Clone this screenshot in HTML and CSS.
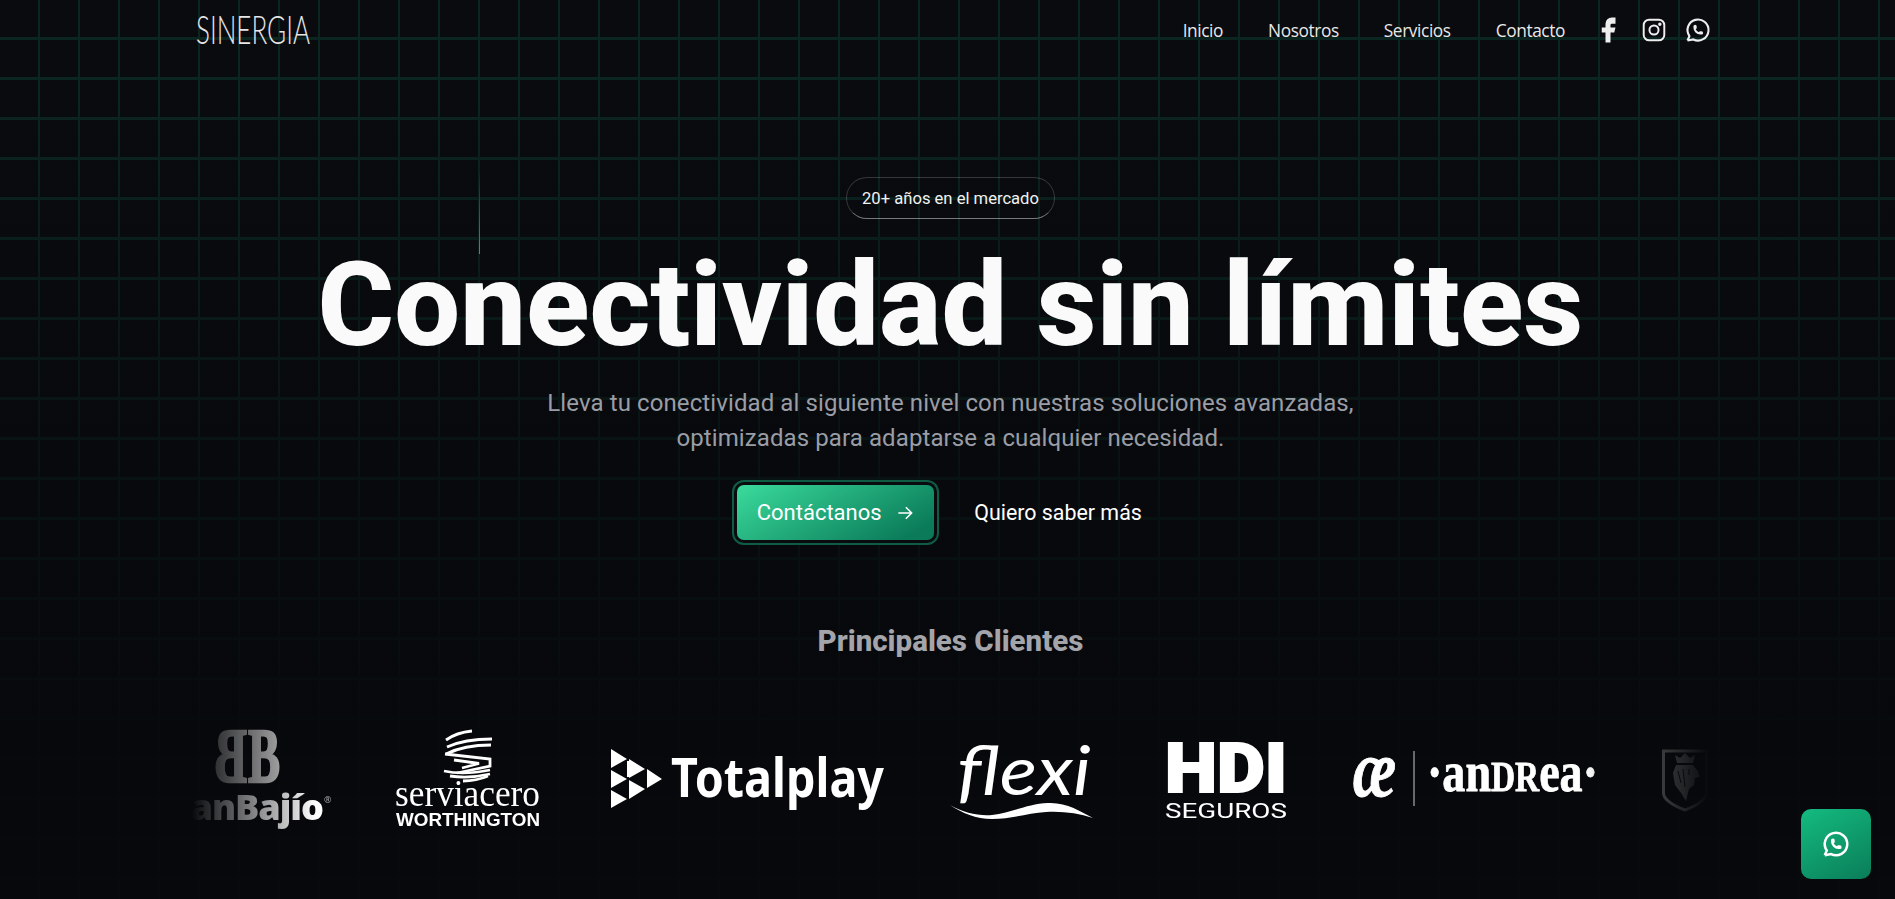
FILE: index.html
```html
<!DOCTYPE html>
<html lang="es">
<head>
    <meta charset="UTF-8">
    <meta name="viewport" content="width=device-width, initial-scale=1.0">
    <title>Sinergia</title>
    <link rel="stylesheet" href="styles.css">
</head>
<body>
    <span class="beam"></span>

    <div class="page">
        <header class="topbar">
            <a class="brand" href="#">
                <svg viewBox="0 0 116 32" width="116" height="32">
                    <text class="brand-text" x="1" y="30" textLength="114" lengthAdjust="spacingAndGlyphs">SINERGIA</text>
                </svg>
            </a>
            <nav class="nav">
                <a href="#">Inicio</a>
                <a href="#">Nosotros</a>
                <a href="#">Servicios</a>
                <a href="#">Contacto</a>
                <div class="socials">
                    <svg class="icon-f" viewBox="0 0 24 24" width="30" height="30"><path d="M7 10v4h3v8h4v-8h3l1-4h-4V8a1 1 0 0 1 1-1h3V2h-3a5 5 0 0 0-5 5v3H7z"/></svg>
                    <svg class="icon-line" viewBox="0 0 24 24" width="26" height="26"><rect x="2.5" y="2.5" width="19" height="19" rx="5"/><circle cx="12" cy="12" r="4.2"/><circle class="dot" cx="17.4" cy="6.6" r=".7"/></svg>
                    <svg class="icon-line icon-wa" viewBox="0 0 24 24" width="28" height="28"><path d="M3 21l1.65-3.8a9 9 0 1 1 3.4 2.9L3 21"/><path d="M9 10a.5.5 0 0 0 1 0V9a.5.5 0 0 0-1 0v1a5 5 0 0 0 5 5h1a.5.5 0 0 0 0-1h-1a.5.5 0 0 0 0 1"/></svg>
                </div>
            </nav>
        </header>

        <main class="hero">
            <div class="pill">20+ años en el mercado</div>
            <h1>Conectividad sin límites</h1>
            <p class="lead">Lleva tu conectividad al siguiente nivel con nuestras soluciones avanzadas,<br>optimizadas para adaptarse a cualquier necesidad.</p>
            <div class="actions">
                <a class="btn-main" href="#">
                    <span>Contáctanos</span>
                    <svg viewBox="0 0 24 24" width="20" height="20"><path d="M4 12h16M13 5l7 7-7 7"/></svg>
                </a>
                <a class="btn-link" href="#">Quiero saber más</a>
            </div>
        </main>

        <section class="clients">
            <h2>Principales Clientes</h2>
            <div class="strip">
                <!-- banbajio -->
                <svg class="logo" viewBox="0 0 140 110" width="140" height="110">
                    <text class="bb" transform="translate(56 61) scale(-1 1)" x="0" y="0" textLength="32" lengthAdjust="spacingAndGlyphs">B</text>
                    <text class="bb" x="57" y="61" textLength="32" lengthAdjust="spacingAndGlyphs">B</text>
                    <text class="bajio" x="132" y="99" text-anchor="end">BanBajío</text>
                    <text class="reg" x="133" y="82">®</text>
                </svg>
                <!-- serviacero -->
                <svg class="logo" viewBox="0 0 152 110" width="152" height="110">
                    <g class="stripes">
                        <path d="M51 19C58 14 67 11 77 10"/>
                        <path d="M52 26C63 21 78 18 97 18"/>
                        <path d="M51 33C65 26 80 24 96 24"/>
                        <path d="M50 33L95 38V45L62 52"/>
                        <path d="M59 39L84 42.5L67 47"/>
                        <path d="M49 50C62 53 80 52 95 49"/>
                        <path d="M55 55C68 57 82 56 95 53"/>
                        <path d="M68 60C76 60 86 58 93 55"/>
                    </g>
                    <text class="servi" x="0" y="85" textLength="145" lengthAdjust="spacingAndGlyphs">serviacero</text>
                    <text class="worth" x="1" y="105" textLength="144" lengthAdjust="spacingAndGlyphs">WORTHINGTON</text>
                </svg>
                <!-- totalplay -->
                <svg class="logo" viewBox="0 0 275 110" width="275" height="110">
                    <path class="solid" d="M0 28L16 38L0 47ZM0 49L16 58L0 67ZM0 69L16 78L0 87ZM18 38L34 48L18 57ZM18 59L34 68L18 78ZM36 48L51 58L36 67ZM16 40L18 40L18 56L16 56Z"/>
                    <text class="total" x="60" y="76" textLength="213" lengthAdjust="spacingAndGlyphs">Totalplay</text>
                </svg>
                <!-- flexi -->
                <svg class="logo" viewBox="0 0 151 110" width="151" height="110">
                    <text class="flexi" x="7" y="74" textLength="134" lengthAdjust="spacingAndGlyphs">flexi</text>
                    <path class="solid" d="M0 84C14 92 28 95 42 94C62 92 76 83 98 82C116 81 130 90 143 97C128 92 112 90 96 91C78 92 62 98 42 98C26 98 12 92 0 84Z"/>
                </svg>
                <!-- hdi -->
                <svg class="logo" viewBox="0 0 124 110" width="124" height="110">
                    <text class="hdi" x="0" y="71" textLength="122" lengthAdjust="spacingAndGlyphs">HDI</text>
                    <text class="seguros" x="0" y="97" textLength="122" lengthAdjust="spacingAndGlyphs">SEGUROS</text>
                </svg>
                <!-- andrea -->
                <svg class="logo" viewBox="0 0 245 110" width="245" height="110">
                    <text class="ae" x="0" y="75" textLength="43" lengthAdjust="spacingAndGlyphs">æ</text>
                    <path class="rule" d="M61 30V85"/>
                    <text class="andrea" x="74" y="70" textLength="171" lengthAdjust="spacingAndGlyphs">·an<tspan class="andrea-caps">DR</tspan>ea·</text>
                </svg>
                <!-- leon -->
                <svg class="logo logo-dim" viewBox="0 0 46 110" width="46" height="110">
                    <path class="shield" d="M1.5 30H44.5V72C44.5 78 36 84 23 89C10 84 1.5 78 1.5 72Z"/>
                    <path class="solid" d="M15 42L13 34L18 37L23 32L28 37L33 34L31 42ZM14 44H31L36 50L38 56L33 57L32 64L27 68L24 80L19 72L13 64L11 52Z"/>
                    <path class="mane" d="M16 50L19 62M21 48L23 66M27 48L27 54"/>
                </svg>
            </div>
        </section>
    </div>

    <a class="fab" href="#">
        <svg viewBox="0 0 24 24" width="30" height="30"><path d="M3 21l1.65-3.8a9 9 0 1 1 3.4 2.9L3 21"/><path d="M9 10a.5.5 0 0 0 1 0V9a.5.5 0 0 0-1 0v1a5 5 0 0 0 5 5h1a.5.5 0 0 0 0-1h-1a.5.5 0 0 0 0 1"/></svg>
    </a>
</body>
</html>
```

FILE: styles.css
```css
html, body {
    margin: 0;
    padding: 0;
}

body {
    height: 899px;
    overflow: hidden;
    font-family: Roboto, Arial, sans-serif;
    color: #fff;
    background-color: #0a0b0e;
    background-image:
        linear-gradient(to bottom, rgba(7, 8, 11, 0) 8%, rgba(7, 8, 11, 0.65) 52%, rgba(7, 8, 11, 0.96) 85%),
        linear-gradient(to right, transparent 38px, #0b2620 38px, #0b2620 40px),
        linear-gradient(to bottom, transparent 37px, #0b2620 37px, #0b2620 39px);
    background-size: 100% 100%, 40px 40px, 40px 40px;
}

a {
    color: inherit;
    text-decoration: none;
}

/* the moving green line on the grid */
.beam {
    position: absolute;
    left: 479px;
    top: 170px;
    width: 1px;
    height: 84px;
    background: linear-gradient(to bottom, transparent, #15a67a);
}

.page {
    padding: 0 185px 0 191px;
}

.topbar {
    display: flex;
    justify-content: space-between;
    align-items: center;
    height: 60px;
}

.brand {
    display: flex;
    padding-left: 4px;
}

.brand-text {
    font-family: Lato, sans-serif;
    font-weight: 300;
    font-size: 40px;
    fill: #e6e6e6;
}

.nav {
    display: flex;
    align-items: center;
    gap: 45px;
    font-family: "Open Sans", sans-serif;
    font-size: 17.3px;
    letter-spacing: -0.4px;
    color: #e8e8e8;
}

.socials {
    display: flex;
    align-items: center;
    gap: 15px;
    margin-left: -17px;
}

.icon-f {
    margin-right: 3px;
}

.icon-wa {
    margin-left: 2px;
    margin-right: -2px;
}

.icon-f path {
    fill: #eee;
}

.icon-line {
    fill: none;
    stroke: #eee;
    stroke-width: 1.8;
}

.icon-line .dot {
    fill: #eee;
}

.hero {
    display: flex;
    flex-direction: column;
    align-items: center;
    padding-top: 117px;
}

.pill {
    box-sizing: border-box;
    height: 42px;
    width: 209px;
    line-height: 42px;
    text-align: center;
    font-size: 16.6px;
    color: #f2f2f2;
    border: 1px solid rgba(255, 255, 255, 0.18);
    border-bottom-color: rgba(255, 255, 255, 0.45);
    border-radius: 21px;
}

h1 {
    margin: 16px 0 0;
    font-size: 117px;
    line-height: 140px;
    font-weight: 800;
    color: #fafafa;
    white-space: nowrap;
}

.lead {
    margin: 11px 0 0;
    font-size: 24px;
    line-height: 35px;
    letter-spacing: 0.1px;
    text-align: center;
    color: #9a9da6;
}

.actions {
    display: flex;
    align-items: center;
    gap: 35px;
    margin-top: 24px;
    margin-left: -27px;
}

.btn-main {
    display: flex;
    align-items: center;
    justify-content: center;
    gap: 13px;
    box-sizing: border-box;
    width: 197px;
    height: 55px;
    margin: 5px;
    font-size: 22px;
    border-radius: 7px;
    background: linear-gradient(150deg, #3adb9c, #0a7a58 90%);
    box-shadow: 0 0 0 3px #0a0b0e, 0 0 0 5px #0f5c45;
}

.btn-main svg {
    fill: none;
    stroke: #fff;
    stroke-width: 1.8;
}

.btn-link {
    font-size: 21.4px;
}

.clients {
    margin-top: 76px;
}

h2 {
    margin: 0;
    font-size: 29.5px;
    line-height: 40px;
    font-weight: 800;
    text-align: center;
    color: #a4a5ab;
}

.strip {
    display: flex;
    gap: 64px;
    height: 110px;
    margin-top: 60px;
    overflow: hidden;
    -webkit-mask-image: linear-gradient(to right, transparent, #000 125px, #000 calc(100% - 125px), transparent);
    mask-image: linear-gradient(to right, transparent, #000 125px, #000 calc(100% - 125px), transparent);
}

.logo {
    flex: none;
    fill: #fff;
}

.logo-dim {
    fill: #8c8c8c;
}

.solid {
    stroke: none;
}

.bb {
    font-family: "Liberation Serif", serif;
    font-weight: 700;
    font-size: 79px;
    fill: #ddd;
    stroke: #ddd;
    stroke-width: 2.5;
}

.bajio {
    font-family: "Open Sans", sans-serif;
    font-weight: 800;
    font-size: 36px;
    letter-spacing: -1px;
}

.reg {
    font-family: "Open Sans", sans-serif;
    font-size: 9px;
    fill: #aaa;
}

.stripes {
    fill: none;
    stroke: #fff;
    stroke-width: 2.8;
}

.servi {
    font-family: "Liberation Serif", serif;
    font-size: 38px;
}

.worth {
    font-family: "Liberation Sans", sans-serif;
    font-weight: 700;
    font-size: 18px;
}

.total {
    font-family: "Noto Sans", sans-serif;
    font-weight: 700;
    font-size: 54px;
}

.flexi {
    font-family: Lato, sans-serif;
    font-style: italic;
    font-weight: 400;
    font-size: 68px;
}

.hdi {
    font-family: Roboto, sans-serif;
    font-weight: 900;
    font-size: 69px;
    stroke: #fff;
    stroke-width: 2;
}

.seguros {
    font-family: Roboto, sans-serif;
    font-weight: 400;
    font-size: 21px;
}

.ae {
    font-family: "Liberation Serif", serif;
    font-style: italic;
    font-weight: 700;
    font-size: 80px;
    stroke: #fff;
    stroke-width: 1;
}

.rule {
    stroke: #888;
    stroke-width: 1.5;
    fill: none;
}

.andrea {
    font-family: "Liberation Serif", serif;
    font-weight: 700;
    font-size: 58px;
    stroke: #fff;
    stroke-width: 0.8;
}

.andrea-caps {
    font-size: 42px;
}

.shield {
    fill: none;
    stroke: #8c8c8c;
    stroke-width: 3;
}

.mane {
    fill: none;
    stroke: #0a0b0e;
    stroke-width: 1;
}

.fab {
    position: fixed;
    left: 1801px;
    top: 809px;
    width: 70px;
    height: 70px;
    display: flex;
    align-items: center;
    justify-content: center;
    border-radius: 10px;
    background: linear-gradient(150deg, #14bb80, #0a7d58);
}

.fab svg {
    fill: none;
    stroke: #fff;
    stroke-width: 2;
}
```
